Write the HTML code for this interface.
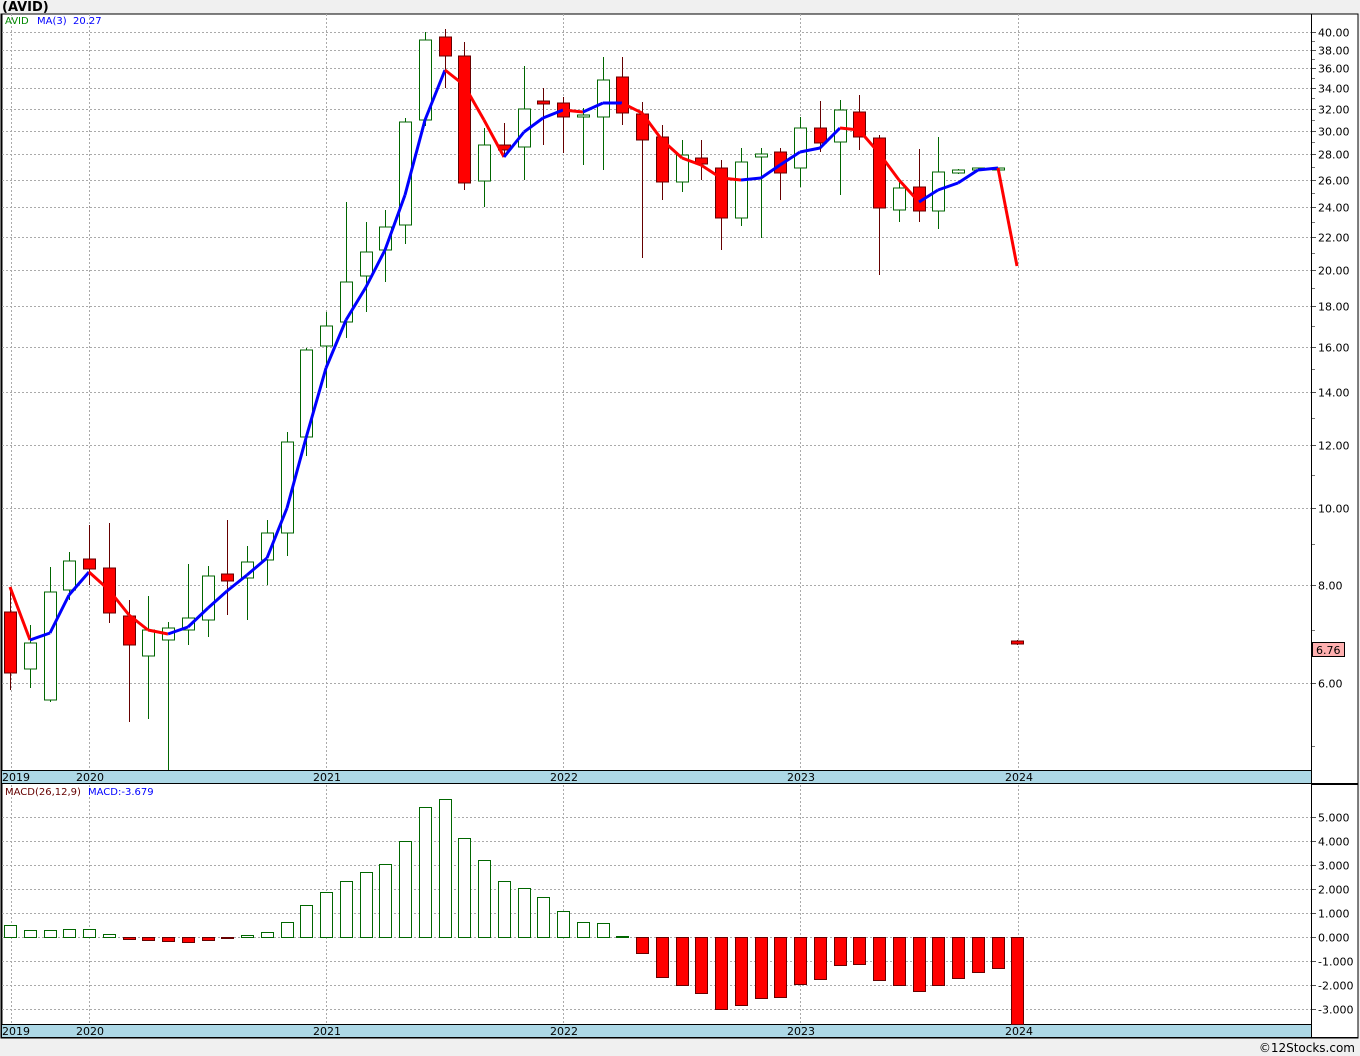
<!DOCTYPE html>
<html><head><meta charset="utf-8"><style>
html,body{margin:0;padding:0;background:#f0f0f0;width:1360px;height:1056px;overflow:hidden}
svg{display:block}
text{font-family:"DejaVu Sans","Liberation Sans",sans-serif;font-size:11px}
.sm{font-size:10px}
</style></head><body>
<svg id="s" width="1360" height="1056" xmlns="http://www.w3.org/2000/svg">
<rect x="0" y="0" width="1360" height="1056" fill="#f0f0f0"/>
<text x="2" y="11" style="font-size:13px;font-weight:bold">(AVID)</text>
<rect x="1" y="14" width="1357" height="1024" fill="#fff" stroke="#000" stroke-width="1"/>
<line x1="1.5" y1="14" x2="1.5" y2="1038" stroke="#000" stroke-width="2"/>
<g id="g"></g>
<text x="1355" y="1052" text-anchor="end" style="font-size:12px">©12Stocks.com</text>
</svg>
<script>
var g=document.getElementById('g'),h='';
function L(x1,y1,x2,y2,c,w,d){h+='<line x1="'+x1+'" y1="'+y1+'" x2="'+x2+'" y2="'+y2+'" stroke="'+c+'" stroke-width="'+(w||1)+'"'+(d?' stroke-dasharray="'+d+'"':'')+'/>';}
function T(x,y,t,c,a,cl){h+='<text x="'+x+'" y="'+y+'" fill="'+(c||'#000')+'"'+(a?' text-anchor="'+a+'"':'')+(cl?' class="'+cl+'"':'')+'>'+t+'</text>';}
function R(x,y,w,hh,f,s){h+='<rect x="'+x+'" y="'+y+'" width="'+w+'" height="'+hh+'" fill="'+f+'" stroke="'+(s||'none')+'"/>';}
function py(p){return 508-238*Math.log2(p/10);}
var GC='#aaa',GD='2,2';
var pl=[40,38,36,34,32,30,28,26,24,22,20,18,16,14,12,10,8,6];
pl.forEach(function(p){var y=Math.round(py(p))+.5;L(2,y,1311,y,GC,1,GD);L(1311,y,1316,y,'#555');T(1318,y+4,p.toFixed(2));});
for(var p=5;p<40;p+=1){if(p%2==1&&p>6){var y=Math.round(py(p))+.5;L(1311,y,1315,y,'#777');}}
[5,7,9].forEach(function(p){var y=Math.round(py(p))+.5;L(1311,y,1315,y,'#777');});
for(var v=5;v>=-3;v--){var y=937-24*v+.5;L(2,y,1311,y,GC,1,GD);L(1311,y,1316,y,'#555');T(1318,y+4,(v<0?'-':'')+Math.abs(v).toFixed(3));}
[11,89,326,563,800,1018].forEach(function(x){L(x+.5,14,x+.5,770,GC,1,GD);L(x+.5,785,x+.5,1024,GC,1,GD);});
var C=[[612,673,587,690,1],[669,643,625,688],[700,592,567,702],[590,561,552,600],[559,569,525,585,1],[568,613,523,623,1],[616,645,600,722,1],[656,630,596,719],[640,628,622,770],[630,618,564,645],[620,576,566,637],[574,581,520,615,1],[578,562,546,620],[560,533,520,585],[533,442,432,556],[437,350,348,456],[346,326,312,388],[322,282,202,338],[276,252,222,312],[250,227,210,282],[225,122,118,244],[120,40,32,126],[37,56,29,88,1],[56,183,42,190,1],[181,145,128,207],[145,150,123,157,1],[147,109,66,180],[101,104,88,145,1],[103,117,97,153,1],[117,115,108,165],[117,80,57,170],[77,113,57,125,1],[114,140,102,258,1],[137,182,125,200,1],[182,155,140,192],[158,164,140,180,1],[168,218,160,250,1],[218,162,148,226],[157,154,148,238],[152,173,148,200,1],[168,128,117,187],[128,143,101,152,1],[142,110,100,195],[112,137,95,150,1],[138,208,135,275,1],[210,188,182,222],[187,211,149,222,1],[211,172,137,229],[173,170,169,174],[169,168,168,169],[168,168,168,168],[641,644,640,645,1]];
var X=function(i){return Math.round(10+19.75*i);};
C.forEach(function(c,i){var x=X(i)+.5,t=Math.min(c[0],c[1]),b=Math.max(c[0],c[1]);var red=c[4];
L(x,c[2],x,c[3],red?'#600':'#060');
var hh=Math.max(b-t,2);R(x-6,t,12,hh,red?'#f00':'#fff',red?'#600':'#060');});
var M=[587,640,633,595,572,590,615,630,634,627,608,591,575,558,508,438,368,320,287,250,195,120,70,85,120,157,132,118,110,112,103,103,113,140,158,165,178,180,178,165,152,148,128,130,153,180,202,190,183,170,168,266];
for(var i=0;i<M.length-1;i++){L(X(i),M[i],X(i+1),M[i+1],M[i+1]>M[i]?'#f00':'#00f',3);}
R(1312.5,642.5,32,14,'#ffb0b0','#000');T(1316,654,'6.76');
function DB(y){R(2,y,1309,13,'#add8e6');L(2,y+.5,1311,y+.5,'#000');L(2,y+13.5,1358,y+13.5,'#000');
[['2019',2],['2020',76],['2021',313],['2022',550],['2023',787],['2024',1005]].forEach(function(a){T(a[1],y+11,a[0]);});}
DB(770);DB(1024);
L(1311.5,14,1311.5,1038,'#000');L(1311,784.5,1358,784.5,'#000');
var B=[925,930,930,929,929,934,939,940,941,942,940,938,935,932,922,905,892,881,872,864,841,807,799,838,860,881,888,897,911,922,923,936,953,977,985,993,1009,1005,998,997,984,979,965,964,980,985,991,985,978,972,968,1024];
B.forEach(function(v,i){var x=X(i)-6+.5;if(v<=937){R(x,v+.5,12,937-v,'#fff','#060');}else{R(x,937.5,12,v-937,'#f00','#600');}});
T(5,24,'AVID','#080',0,'sm');T(37,24,'MA(3)','#00f',0,'sm');T(73,24,'20.27','#00f',0,'sm');
T(5,795,'MACD(26,12,9)','#600',0,'sm');T(88,795,'MACD:-3.679','#00f',0,'sm');
g.innerHTML=h;
</script>
</body></html>
